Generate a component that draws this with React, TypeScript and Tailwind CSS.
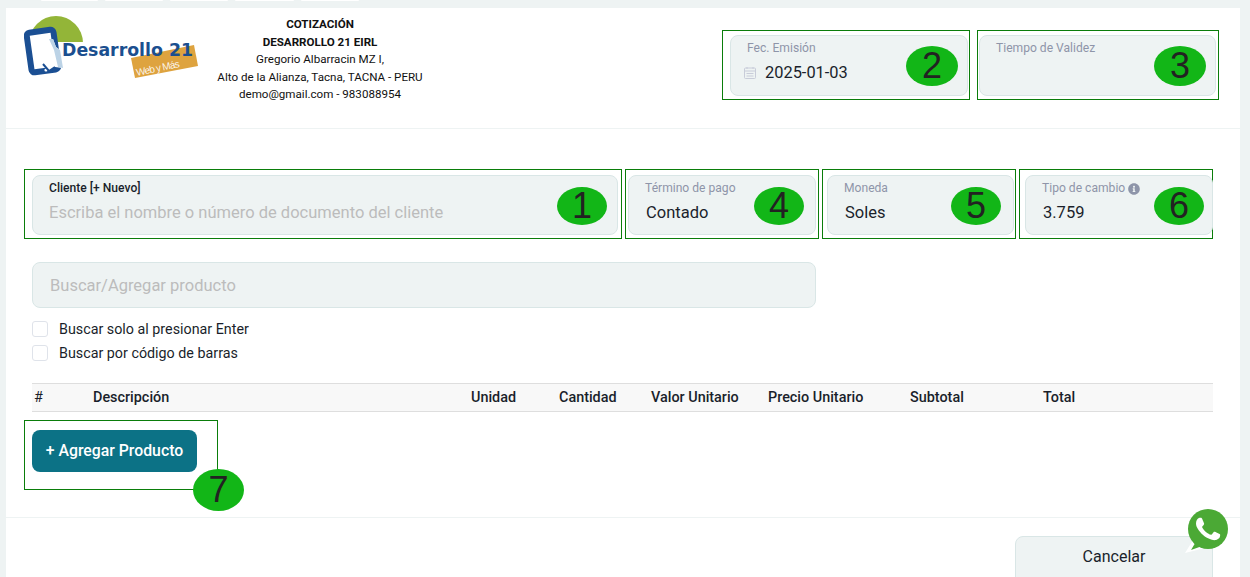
import { type ReactNode } from 'react'
import { FaInfoCircle } from 'react-icons/fa'

/* ── Annotation overlays ── */

function Bubble({ n, className }: { n: number; className: string }) {
  return (
    <span
      className={`absolute z-10 flex items-center justify-center rounded-[50%] bg-[#12b617] font-['Liberation_Sans',sans-serif] text-[36px] leading-none text-[#222] ${className}`}
    >
      {n}
    </span>
  )
}

/* ── Form field ── */

function Field({
  label,
  children,
  n,
  boxClass,
  bubbleClass,
  className,
}: {
  label: ReactNode
  children?: ReactNode
  n: number
  boxClass: string
  bubbleClass: string
  className: string
}) {
  return (
    <div className={`relative shrink-0 ${className}`}>
      <span className={`absolute border border-[#0a7d0a] ${boxClass}`} />
      <div className="relative h-full rounded-lg border border-[#d9e6e6] bg-[#eef3f3] pl-4 pt-[5px]">
        <div className="flex h-[15px] items-center text-[12.1px] leading-[15px] text-[#8e95a9]">{label}</div>
        {children}
      </div>
      <Bubble n={n} className={bubbleClass} />
    </div>
  )
}

function Logo() {
  return (
    <svg width="176" height="68" viewBox="24 14 176 68" className="shrink-0">
      <circle cx="56" cy="43" r="27" fill="#93b538" />
      <rect x="58" y="42" width="30" height="34" fill="#fff" />
      <rect
        x="29"
        y="31"
        width="27"
        height="40"
        rx="3"
        transform="rotate(-8 43 51)"
        fill="#fff"
        stroke="#1b4f93"
        strokeWidth="6"
      />
      <circle cx="46" cy="70" r="1.6" fill="#fff" />
      <path d="M46 55 L49 39 L53 39 L56 47 L60 50 L63 68 L55 67 L49 71 L41 62 Z" fill="#fff" />
      <path d="M49 39 L53 39 L56 47 L60 50 L63 68 L58 67 L54 50 Z" fill="#bcd3e6" />
      <path d="M43 64 L49 71 L55 67" fill="none" stroke="#1b4f93" strokeWidth="2" />
      <path d="M131 58 L194 45 L198 66 L135 78 Z" fill="#dea33f" />
      <text
        x="62"
        y="56"
        textLength="131"
        lengthAdjust="spacingAndGlyphs"
        fontFamily="'DejaVu Sans', sans-serif"
        fontWeight="700"
        fontSize="18"
        fill="#1b4f8f"
      >
        Desarrollo 21
      </text>
      <text
        x="137"
        y="76"
        textLength="44"
        transform="rotate(-12 137 76)"
        fontFamily="'Liberation Sans', sans-serif"
        fontSize="10"
        fill="#fff"
        fillOpacity="0.9"
      >
        Web y Más
      </text>
    </svg>
  )
}

function WhatsApp() {
  return (
    <svg width="46" height="46" viewBox="0 0 46 46" className="absolute left-[1185px] top-[507px] z-20">
      <path d="M10 30 L0 46 L20 41 Z" fill="#fff" />
      <path d="M12 33 L6 43 L20 38 Z" fill="#4ba935" />
      <circle cx="23" cy="22" r="20" fill="#4ba935" />
      <g transform="translate(-1 -2) scale(2)" fill="#fff">
        <path d="M17.472 14.382c-.297-.149-1.758-.867-2.03-.967-.273-.099-.471-.148-.67.15-.197.297-.767.966-.94 1.164-.173.199-.347.223-.644.075-.297-.15-1.255-.463-2.39-1.475-.883-.788-1.48-1.761-1.653-2.059-.173-.297-.018-.458.13-.606.134-.133.298-.347.446-.52.149-.174.198-.298.298-.497.099-.198.05-.371-.025-.52-.075-.149-.669-1.612-.916-2.207-.242-.579-.487-.5-.669-.51-.173-.008-.371-.01-.57-.01-.198 0-.52.074-.792.372-.272.297-1.04 1.016-1.04 2.479 0 1.462 1.065 2.875 1.213 3.074.149.198 2.096 3.2 5.077 4.487.709.306 1.262.489 1.694.625.712.227 1.36.195 1.871.118.571-.085 1.758-.719 2.006-1.413.248-.694.248-1.289.173-1.413-.074-.124-.272-.198-.57-.347z" />
      </g>
    </svg>
  )
}

function CalendarIcon() {
  return (
    <svg width="14" height="14" viewBox="0 0 14 14" fill="none" stroke="#c8ccd9" strokeWidth="1" className="shrink-0">
      <rect x="1.5" y="2" width="11" height="10.5" rx="1" />
      <path d="M1.5 5h11M4 1v2M10 1v2M3.5 7.5h7M3.5 10h7" />
    </svg>
  )
}

const columns = [
  '#',
  'Descripción',
  'Unidad',
  'Cantidad',
  'Valor Unitario',
  'Precio Unitario',
  'Subtotal',
  'Total',
]

export default function App() {
  return (
    <div className="relative h-[577px] w-[1250px] overflow-hidden bg-[#eef3f3] font-['Roboto',sans-serif] text-[#1a1f2b]">
      {/* tabs cut off by the top edge */}
      <div className="flex h-2 items-start gap-[7px] pl-[41px]">
        <span className="h-px w-[57px] rounded-b bg-white" />
        <span className="h-px w-[58px] rounded-b bg-white" />
        <span className="h-px w-[58px] rounded-b bg-white" />
        <span className="h-px w-[59px] rounded-b bg-white" />
        <span className="h-px w-[58px] rounded-b bg-white" />
      </div>

      <div className="ml-1.5 w-[1234px] bg-white">
        {/* ── Header ── */}
        <header className="flex h-[121px] items-start border-b border-[#eef3f3] pl-[18px]">
          <div className="pt-1.5">
            <Logo />
          </div>
          <div className="ml-[15px] w-[210px] pt-2 text-center text-[11.6px] leading-[17.5px] text-[#111]">
            <div className="font-bold">COTIZACIÓN</div>
            <div className="font-bold">DESARROLLO 21 EIRL</div>
            <div>Gregorio Albarracin MZ I,</div>
            <div className="whitespace-nowrap">Alto de la Alianza, Tacna, TACNA - PERU</div>
            <div>demo@gmail.com - 983088954</div>
          </div>
          <div className="ml-[305px] flex gap-[11px] pt-[27px]">
            <Field
              label="Fec. Emisión"
              n={2}
              className="h-[61px] w-[238px]"
              boxClass="-left-2 -right-0.5 -top-[5px] -bottom-1"
              bubbleClass="left-[176px] top-[11px] h-10 w-[52px]"
            >
              <div className="-ml-1 mt-[7px] flex items-center gap-2 text-[16.4px] leading-5">
                <CalendarIcon />
                <span>2025-01-03</span>
              </div>
            </Field>
            <Field
              label="Tiempo de Validez"
              n={3}
              className="h-[61px] w-[237px]"
              boxClass="-left-0.5 -right-[3px] -top-[5px] -bottom-1"
              bubbleClass="left-[175px] top-[11px] h-10 w-[52px]"
            />
          </div>
        </header>

        <main className="px-[26px] pt-[46px]">
          {/* ── Client row ── */}
          <div className="flex">
            <Field
              label={<span className="font-medium text-[#1a1f2b]">Cliente [+ Nuevo]</span>}
              n={1}
              className="h-[60px] w-[586px]"
              boxClass="-left-2 -right-1 -top-1.5 -bottom-1"
              bubbleClass="left-[525px] top-3 h-[38px] w-[50px]"
            >
              <div className="mt-[7px] text-[16.5px] leading-5 text-[#bcbcbc]">
                Escriba el nombre o número de documento del cliente
              </div>
            </Field>
            <Field
              label="Término de pago"
              n={4}
              className="ml-2.5 h-[60px] w-[188px]"
              boxClass="-left-[3px] -right-[3px] -top-1.5 -bottom-1"
              bubbleClass="left-[126px] top-3 h-[38px] w-[50px]"
            >
              <div className="mt-[7px] pl-px text-[16.5px] leading-5">Contado</div>
            </Field>
            <Field
              label="Moneda"
              n={5}
              className="ml-[11px] h-[60px] w-[187px]"
              boxClass="-left-[5px] -right-0.5 -top-1.5 -bottom-1"
              bubbleClass="left-[124px] top-3 h-[38px] w-[50px]"
            >
              <div className="mt-[7px] pl-px text-[16.5px] leading-5">Soles</div>
            </Field>
            <Field
              label={
                <span className="flex items-center gap-[3px]">
                  Tipo de cambio
                  <FaInfoCircle size={12} color="#8e95a9" />
                </span>
              }
              n={6}
              className="ml-[11px] h-[60px] w-[188px]"
              boxClass="-left-1.5 right-0 -top-1.5 -bottom-1"
              bubbleClass="left-[129px] top-3 h-[38px] w-[50px]"
            >
              <div className="mt-[7px] pl-px text-[16.5px] leading-5">3.759</div>
            </Field>
          </div>

          {/* ── Product search ── */}
          <div className="mt-[27px] flex h-[46px] w-[784px] items-center rounded-lg border border-[#d9e6e6] bg-[#eef3f3] pl-[17px] pt-0.5 text-[16.5px] text-[#bcbcbc]">
            Buscar/Agregar producto
          </div>
          <label className="mt-[13px] flex h-4 items-center gap-[11px] text-[14.3px]">
            <span className="size-4 rounded-[3px] border border-[#dfe3ea] bg-white" />
            <span className="pt-0.5">Buscar solo al presionar Enter</span>
          </label>
          <label className="mt-2 flex h-4 items-center gap-[11px] text-[14.3px]">
            <span className="size-4 rounded-[3px] border border-[#dfe3ea] bg-white" />
            <span className="pt-0.5">Buscar por código de barras</span>
          </label>

          {/* ── Items table ── */}
          <div className="mt-[22px] grid h-[29px] w-[1181px] grid-cols-[61px_378px_88px_92px_117px_142px_133px_1fr] items-center border-y border-[#dedede] bg-[#f8f8f8] text-[14.4px] font-medium">
            {columns.map(col => (
              <span key={col} className={col === '#' ? 'pl-0.5 font-normal' : ''}>
                {col}
              </span>
            ))}
          </div>

          <div className="relative mt-[18px] h-[42px] w-[165px]">
            <span className="absolute -bottom-[18px] -left-2 -right-[21px] -top-2.5 border border-[#0a7d0a]" />
            <button className="relative h-full w-full rounded-lg bg-[#0c7286] text-[15.8px] font-medium text-white">
              + Agregar Producto
            </button>
            <Bubble n={7} className="left-[161px] top-[39px] h-[42px] w-[51px]" />
          </div>
        </main>

        {/* ── Footer ── */}
        <footer className="mt-[45px] flex h-[80px] justify-end border-t border-[#eef3f3] pr-[27px] pt-[18px]">
          <button className="h-[60px] w-[198px] rounded-lg border border-[#d9e6e6] bg-[#eef3f3] pb-[18px] text-base">
            Cancelar
          </button>
        </footer>
      </div>

      <WhatsApp />
    </div>
  )
}
